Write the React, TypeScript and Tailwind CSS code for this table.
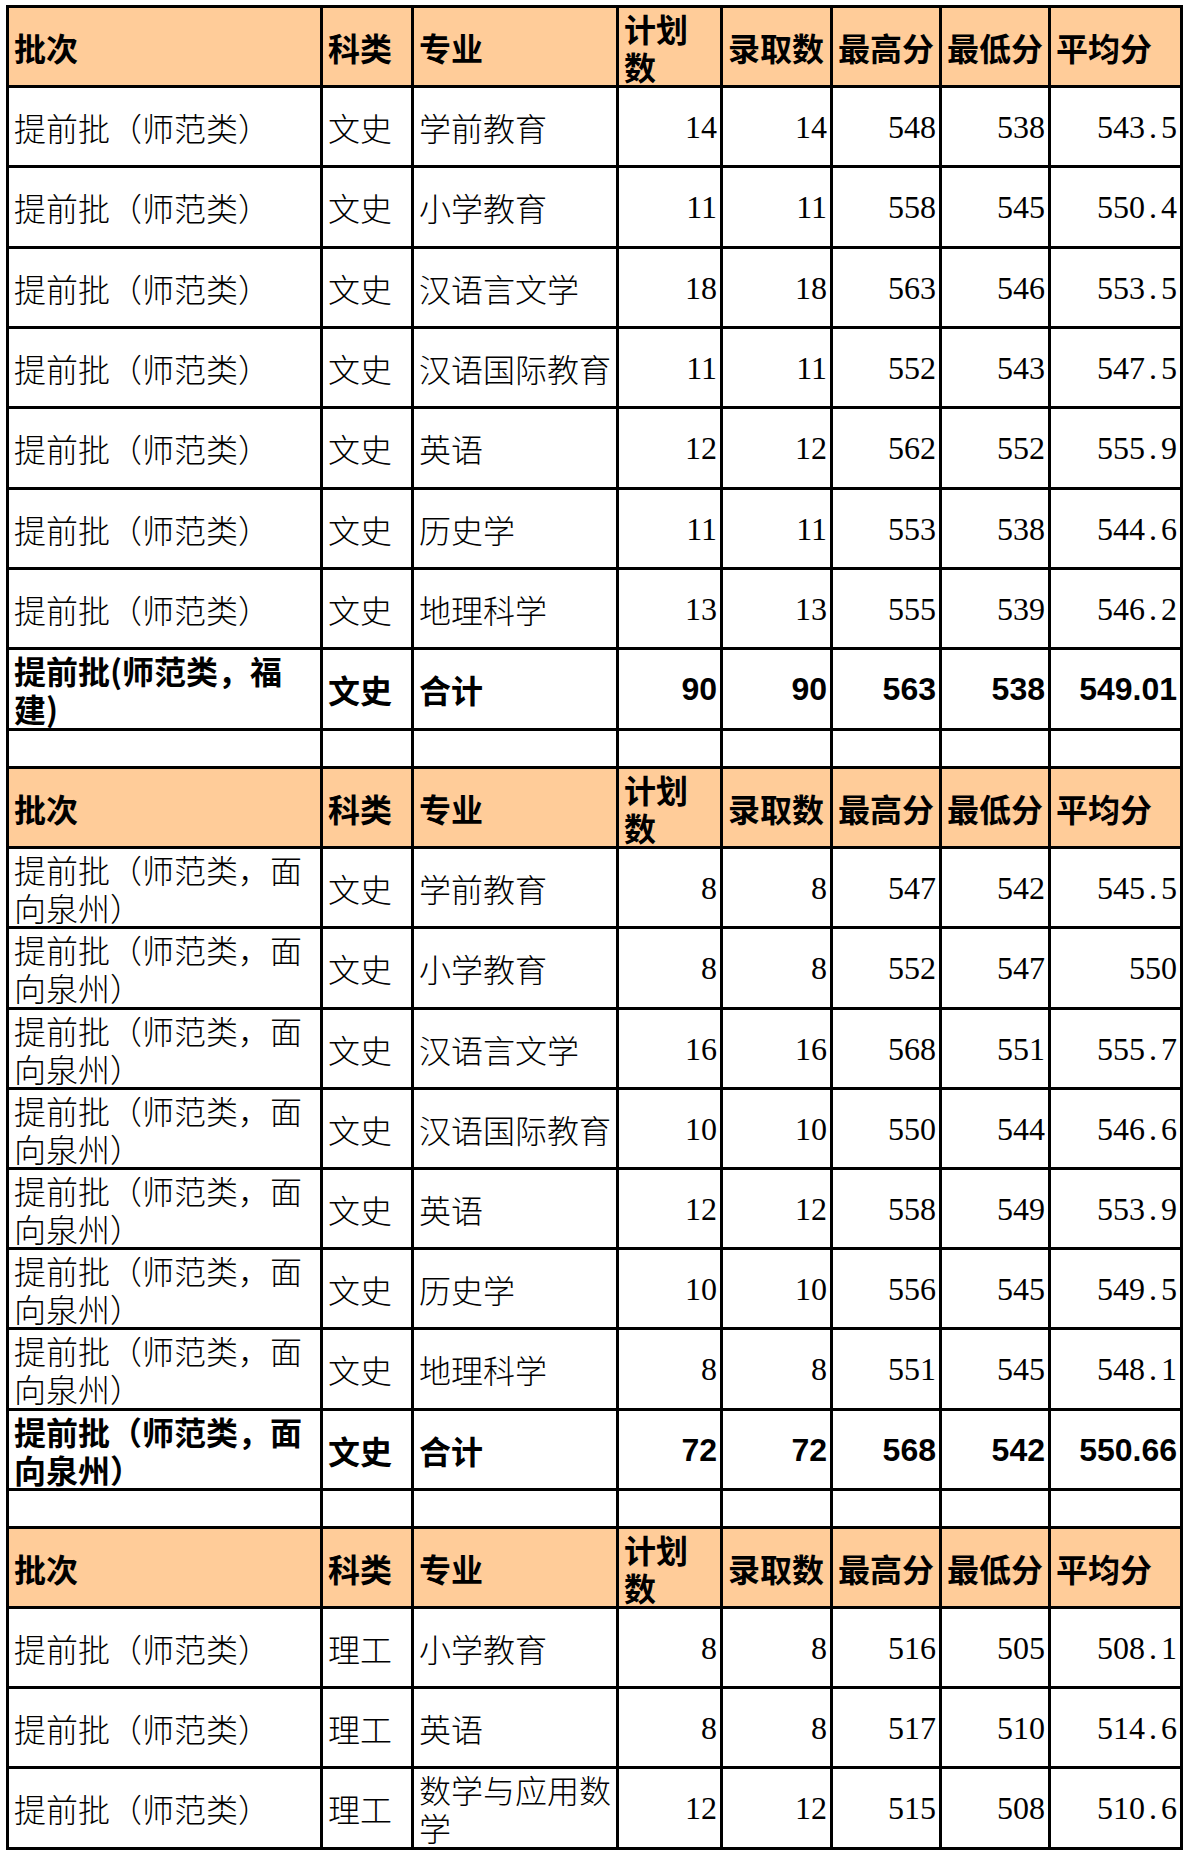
import React from "react";

type Row = {
  batch: string[];
  kind: string;
  major: string[];
  plan: string;
  admit: string;
  max: string;
  min: string;
  avg: string;
  bold?: boolean;
  h: string;
};

const gridCls =
  "grid grid-cols-[314px_91px_205px_104px_110px_109px_109px_132px]";
const cellCls = "flex items-center border-r-[3px] border-b-[3px] border-black";
const cjk = "font-['Noto_Sans_CJK_SC',sans-serif]";

const SF = ["提前批（师范类）"];
const QZ = ["提前批（师范类，面", "向泉州）"];

const sections: { header: string; rows: Row[]; blank?: boolean }[] = [
  {
    header: "h-[80px]",
    blank: true,
    rows: [
      { batch: SF, kind: "文史", major: ["学前教育"], plan: "14", admit: "14", max: "548", min: "538", avg: "543.5", h: "h-[80px]" },
      { batch: SF, kind: "文史", major: ["小学教育"], plan: "11", admit: "11", max: "558", min: "545", avg: "550.4", h: "h-[81px]" },
      { batch: SF, kind: "文史", major: ["汉语言文学"], plan: "18", admit: "18", max: "563", min: "546", avg: "553.5", h: "h-[80px]" },
      { batch: SF, kind: "文史", major: ["汉语国际教育"], plan: "11", admit: "11", max: "552", min: "543", avg: "547.5", h: "h-[80px]" },
      { batch: SF, kind: "文史", major: ["英语"], plan: "12", admit: "12", max: "562", min: "552", avg: "555.9", h: "h-[81px]" },
      { batch: SF, kind: "文史", major: ["历史学"], plan: "11", admit: "11", max: "553", min: "538", avg: "544.6", h: "h-[80px]" },
      { batch: SF, kind: "文史", major: ["地理科学"], plan: "13", admit: "13", max: "555", min: "539", avg: "546.2", h: "h-[80px]" },
      { batch: ["提前批(师范类，福", "建)"], kind: "文史", major: ["合计"], plan: "90", admit: "90", max: "563", min: "538", avg: "549.01", bold: true, h: "h-[81px]" },
    ],
  },
  {
    header: "h-[80px]",
    blank: true,
    rows: [
      { batch: QZ, kind: "文史", major: ["学前教育"], plan: "8", admit: "8", max: "547", min: "542", avg: "545.5", h: "h-[80px]" },
      { batch: QZ, kind: "文史", major: ["小学教育"], plan: "8", admit: "8", max: "552", min: "547", avg: "550", h: "h-[81px]" },
      { batch: QZ, kind: "文史", major: ["汉语言文学"], plan: "16", admit: "16", max: "568", min: "551", avg: "555.7", h: "h-[80px]" },
      { batch: QZ, kind: "文史", major: ["汉语国际教育"], plan: "10", admit: "10", max: "550", min: "544", avg: "546.6", h: "h-[80px]" },
      { batch: QZ, kind: "文史", major: ["英语"], plan: "12", admit: "12", max: "558", min: "549", avg: "553.9", h: "h-[80px]" },
      { batch: QZ, kind: "文史", major: ["历史学"], plan: "10", admit: "10", max: "556", min: "545", avg: "549.5", h: "h-[80px]" },
      { batch: QZ, kind: "文史", major: ["地理科学"], plan: "8", admit: "8", max: "551", min: "545", avg: "548.1", h: "h-[81px]" },
      { batch: ["提前批（师范类，面", "向泉州）"], kind: "文史", major: ["合计"], plan: "72", admit: "72", max: "568", min: "542", avg: "550.66", bold: true, h: "h-[80px]" },
    ],
  },
  {
    header: "h-[80px]",
    rows: [
      { batch: SF, kind: "理工", major: ["小学教育"], plan: "8", admit: "8", max: "516", min: "505", avg: "508.1", h: "h-[80px]" },
      { batch: SF, kind: "理工", major: ["英语"], plan: "8", admit: "8", max: "517", min: "510", avg: "514.6", h: "h-[80px]" },
      { batch: SF, kind: "理工", major: ["数学与应用数", "学"], plan: "12", admit: "12", max: "515", min: "508", avg: "510.6", h: "h-[81px]" },
    ],
  },
];

// SimSun-style digits: half-width period
function Num({ v, bold }: { v: string; bold?: boolean }) {
  if (bold) {
    return (
      <span className="font-['Liberation_Sans',sans-serif] font-bold text-[32px] leading-[38px]">
        {v}
      </span>
    );
  }
  const [int, frac] = v.split(".");
  return (
    <span className="font-['Liberation_Serif',serif] text-[32px] leading-[38px] whitespace-nowrap">
      {int}
      {frac !== undefined && (
        <>
          <span className="inline-block w-[16px] text-center">.</span>
          {frac}
        </>
      )}
    </span>
  );
}

function Lines({ lines }: { lines: string[] }) {
  return (
    <div className="leading-[38px] whitespace-nowrap">
      {lines.map((l, i) => (
        <div key={i}>{l}</div>
      ))}
    </div>
  );
}

function HeaderRow({ h }: { h: string }) {
  const hc = `${cellCls} bg-[#ffcc99] pl-[5px] ${h}`;
  return (
    <div className={`${gridCls} ${cjk} font-bold text-[32px] text-black`}>
      <div className={hc}>批次</div>
      <div className={hc}>科类</div>
      <div className={hc}>专业</div>
      <div className={hc}>
        <Lines lines={["计划", "数"]} />
      </div>
      <div className={`${hc} pl-[3px]`}>录取数</div>
      <div className={`${hc} pl-[2px]`}>最高分</div>
      <div className={hc}>最低分</div>
      <div className={hc}>平均分</div>
    </div>
  );
}

function DataRow({ r }: { r: Row }) {
  const tc = `${cellCls} pl-[5px] ${r.h}`;
  const nc = `${cellCls} justify-end pr-[3px] ${r.h}`;
  return (
    <div
      className={`${gridCls} ${cjk} text-[32px] text-black ${
        r.bold ? "font-bold" : "font-light"
      }`}
    >
      <div className={tc}>
        <Lines lines={r.batch} />
      </div>
      <div className={tc}>{r.kind}</div>
      <div className={tc}>
        <Lines lines={r.major} />
      </div>
      <div className={nc}>
        <Num v={r.plan} bold={r.bold} />
      </div>
      <div className={nc}>
        <Num v={r.admit} bold={r.bold} />
      </div>
      <div className={nc}>
        <Num v={r.max} bold={r.bold} />
      </div>
      <div className={nc}>
        <Num v={r.min} bold={r.bold} />
      </div>
      <div className={nc}>
        <Num v={r.avg} bold={r.bold} />
      </div>
    </div>
  );
}

function BlankRow() {
  const bc = `${cellCls} h-[38px]`;
  return (
    <div className={gridCls}>
      {Array.from({ length: 8 }).map((_, i) => (
        <div key={i} className={bc} />
      ))}
    </div>
  );
}

export default function App() {
  return (
    <div className="min-h-[1857px] w-[1190px] bg-white">
      <div className="ml-[6px] pt-[5px]">
        <div className="w-fit border-l-[3px] border-t-[3px] border-black">
          {sections.map((s, i) => (
            <React.Fragment key={i}>
              <HeaderRow h={s.header} />
              {s.rows.map((r, j) => (
                <DataRow key={j} r={r} />
              ))}
              {s.blank && <BlankRow />}
            </React.Fragment>
          ))}
        </div>
      </div>
    </div>
  );
}
